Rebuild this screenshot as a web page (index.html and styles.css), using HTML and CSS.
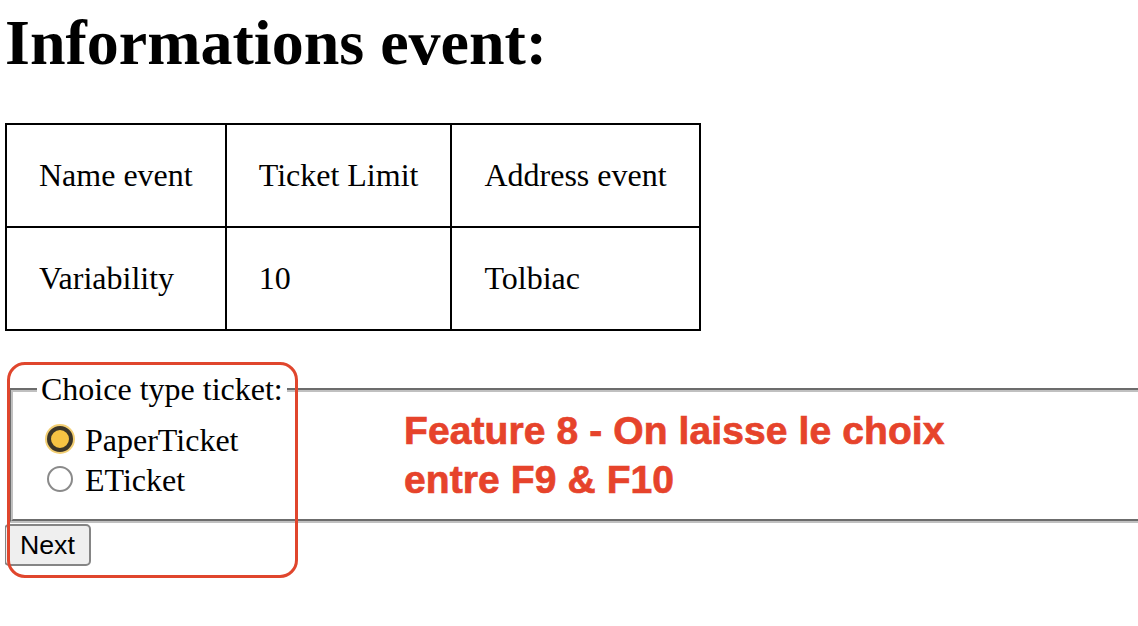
FILE: index.html
```html
<!DOCTYPE html>
<html lang="en">
<head>
    <meta charset="UTF-8">
    <meta name="viewport" content="width=device-width, initial-scale=1.0">
    <title>Informations event</title>
    <link rel="stylesheet" href="styles.css">
</head>
<body>
    <h1>Informations event:</h1>
    <table class="event-table">
        <tr>
            <td>Name event</td>
            <td>Ticket Limit</td>
            <td>Address event</td>
        </tr>
        <tr>
            <td>Variability</td>
            <td>10</td>
            <td>Tolbiac</td>
        </tr>
    </table>

    <form class="ticket-form">
        <fieldset>
            <legend>Choice type ticket:</legend>
            <input type="radio" id="paper" name="ticket" value="paper" checked>
            <label for="paper">PaperTicket</label><br>
            <input type="radio" id="eticket" name="ticket" value="eticket">
            <label for="eticket">ETicket</label>
        </fieldset>
        <button type="button">Next</button>
    </form>

    <div class="note-box"></div>
    <p class="note-text">Feature 8 - On laisse le choix<br>entre F9 &amp; F10</p>
</body>
</html>
```

FILE: styles.css
```css
body {
    margin: 0 0 0 5px;
    min-height: 600px;
    font-family: "Liberation Serif", "Times New Roman", serif;
    font-size: 32px;
    background: #fff;
    color: #000;
    position: relative;
}
h1 {
    font-size: 64px;
    font-weight: bold;
    margin: 6px 0 43px;
}
.event-table {
    border-collapse: collapse;
}
.event-table td {
    border: 2px solid #000;
    padding: 32px;
    line-height: 37px;
}
.ticket-form {
    margin-top: 40px;
    overflow: hidden;
    padding-bottom: 2px;
}
fieldset {
    margin: 0 -60px 0 4px;
    padding: 11px 24px 20px;
    border: 4px groove rgb(192, 192, 192);
    line-height: 37px;
}
legend {
    padding: 0 4px;
}
input[type="radio"] {
    appearance: none;
    -webkit-appearance: none;
    width: 26px;
    height: 26px;
    margin: 6px 4px 0 10px;
    border: 2px solid #8a8a8a;
    border-radius: 50%;
    background: #fff;
    box-sizing: border-box;
    vertical-align: baseline;
    position: relative;
    top: 1px;
}
input[type="radio"]:checked {
    background: #f6c343;
    border: 4px solid #3b3528;
    box-shadow: 0 0 0 2px #f3cf74;
}
button {
    font-family: "Liberation Sans", Arial, sans-serif;
    font-size: 26.7px;
    line-height: 31px;
    padding: 4px 14px 3px;
    margin: 1px 0 0 -1px;
    background: #efefef;
    border: 2px solid #858585;
    border-radius: 5px;
    color: #000;
}
.note-box {
    position: absolute;
    left: 2px;
    top: 362px;
    width: 285px;
    height: 210px;
    border: 3px solid #e0462d;
    border-radius: 18px;
}
.note-text {
    position: absolute;
    left: 399px;
    top: 406px;
    margin: 0;
    font-family: "Liberation Sans", Arial, sans-serif;
    font-weight: bold;
    font-size: 39px;
    line-height: 49px;
    letter-spacing: 0.1px;
    color: #e6432b;
    -webkit-text-stroke: 0.7px #e6432b;
}
```
